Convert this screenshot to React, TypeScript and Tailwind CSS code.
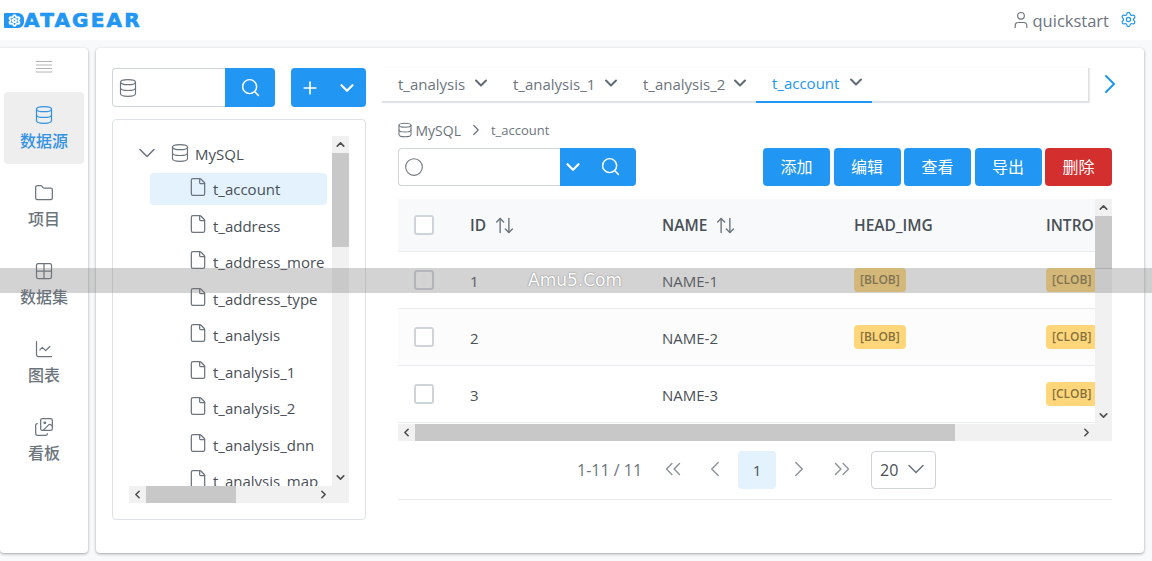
import React from 'react';
import {
  ArrowUpDown,
  ChartLine,
  ChevronDown,
  ChevronLeft,
  ChevronRight,
  ChevronUp,
  ChevronsLeft,
  ChevronsRight,
  Circle,
  Database,
  File,
  Folder,
  Grid2x2,
  Images,
  Plus,
  Search,
  Settings,
  User,
} from 'lucide-react';

const font = "font-['Open_Sans','Noto_Sans_CJK_SC',sans-serif]";

const navItems = [
  { label: '数据源', Icon: Database, active: true },
  { label: '项目', Icon: Folder, active: false },
  { label: '数据集', Icon: Grid2x2, active: false },
  { label: '图表', Icon: ChartLine, active: false },
  { label: '看板', Icon: Images, active: false },
];

const tables = [
  't_account',
  't_address',
  't_address_more',
  't_address_type',
  't_analysis',
  't_analysis_1',
  't_analysis_2',
  't_analysis_dnn',
  't_analysis_map',
];

const tabs = [
  { name: 't_analysis', width: 'w-[115px]' },
  { name: 't_analysis_1', width: 'w-[130px]' },
  { name: 't_analysis_2', width: 'w-[129px]' },
  { name: 't_account', width: 'w-[116px]', active: true },
];

const actions = [
  { label: '添加', color: 'bg-[#2196f3]' },
  { label: '编辑', color: 'bg-[#2196f3]' },
  { label: '查看', color: 'bg-[#2196f3]' },
  { label: '导出', color: 'bg-[#2196f3]' },
  { label: '删除', color: 'bg-[#d32f2f]' },
];

const rows = [
  { id: '1', name: 'NAME-1', blob: true, bg: 'bg-white' },
  { id: '2', name: 'NAME-2', blob: true, bg: 'bg-[#fcfcfc]' },
  { id: '3', name: 'NAME-3', blob: false, bg: 'bg-white' },
];

const Arrow = ({ Icon }: { Icon: typeof ChevronUp }) => (
  <div className="w-[17px] h-[17px] shrink-0 flex items-center justify-center">
    <Icon size={13} strokeWidth={3} className="text-[#505050]" />
  </div>
);

const Badge = ({ text }: { text: string }) => (
  <span className="shrink-0 h-6 px-[6px] flex items-center rounded-[4px] bg-[#ffd77a] text-[12px] font-semibold text-[#85703f]">
    {text}
  </span>
);

const Logo = () => (
  <div className="flex items-center pl-1 text-[#2196f3]">
    <div className="w-5 h-[15px] bg-[#2196f3] rounded-r-[6px] rounded-l-[1px] flex items-center justify-center">
      <Settings size={13} strokeWidth={3.5} className="text-white" />
    </div>
    <span className="font-['DejaVu_Sans',sans-serif] font-bold text-[20px] leading-none tracking-[2.2px] [-webkit-text-stroke:0.7px_#2196f3]">
      ATAGEAR
    </span>
  </div>
);

const MenuLines = () => (
  <svg width="16" height="12" viewBox="0 0 16 12" className="text-[#b4b4b4]">
    <path d="M0 .5h16M0 4h16M0 7.5h16M0 11h16" stroke="currentColor" strokeWidth="1" fill="none" />
  </svg>
);

const SideNav = () => (
  <aside className="w-[88px] h-[505px] shrink-0 bg-white rounded-r-[4px] rounded-b-[4px] shadow-[0_1px_3px_rgba(0,0,0,0.35)] flex flex-col items-center">
    <div className="h-11 flex justify-center shrink-0 pt-[13px]">
      <MenuLines />
    </div>
    <nav className="flex flex-col gap-[6px]">
      {navItems.map(({ label, Icon, active }) => (
        <div
          key={label}
          className={`w-20 h-[72px] rounded-[4px] pt-[1px] flex flex-col items-center justify-center gap-[5px] text-[16px] leading-[22px] font-medium ${
            active ? 'bg-[#eeeeee] text-[#3593e4]' : 'text-[#6c757d]'
          }`}
        >
          <Icon size={20} strokeWidth={1.5} />
          <span>{label}</span>
        </div>
      ))}
    </nav>
  </aside>
);

const TreeColumn = () => (
  <div className="w-[254px] shrink-0 flex flex-col gap-3">
    <div className="flex h-[39px] gap-4">
      <div className="flex w-[163px]">
        <div className="w-[113px] border border-r-0 border-[#ced4da] rounded-l-[4px] pl-[5px] flex items-center">
          <Database size={20} strokeWidth={1.4} className="text-[#6c757d]" />
        </div>
        <div className="w-[50px] bg-[#2196f3] rounded-r-[4px] flex items-center justify-center">
          <Search size={21} strokeWidth={1.7} className="text-white" />
        </div>
      </div>
      <div className="w-[75px] bg-[#2196f3] rounded-[4px] flex items-center text-white">
        <Plus size={20} strokeWidth={2} className="ml-[9px]" />
        <ChevronDown size={22} strokeWidth={2.4} className="ml-[16px]" />
      </div>
    </div>
    <div className="h-[401px] border border-[#dee2e6] rounded-[4px] p-4">
      <div className="h-[367px] w-[220px] flex flex-col">
        <div className="flex h-[350px]">
          <div className="w-[203px] overflow-hidden text-[#495057] text-[15px]">
            <div className="h-[35px] flex items-center pl-1">
              <ChevronDown size={28} strokeWidth={1.3} className="shrink-0 text-[#6c757d] -translate-y-[1px]" />
              <Database size={20} strokeWidth={1.4} className="shrink-0 ml-[9px] text-[#6c757d] -translate-y-[1px]" />
              <span className="ml-[5px] translate-y-[1px]">MySQL</span>
            </div>
            {tables.map((name, i) => (
              <div key={name} className="h-[36.5px] pl-[21px] flex items-center">
                <div
                  className={`w-[177px] h-8 rounded-[4px] pl-[38px] flex items-center whitespace-nowrap ${
                    i === 0 ? 'bg-[#e3f2fd]' : ''
                  }`}
                >
                  <File size={20} strokeWidth={1.5} className="shrink-0 -translate-y-[2px] text-[#6c757d]" />
                  <span className="ml-[5px]">{name}</span>
                </div>
              </div>
            ))}
          </div>
          <div className="w-[17px] bg-[#f1f1f1] flex flex-col">
            <Arrow Icon={ChevronUp} />
            <div className="h-[94px] bg-[#c8c8c8]" />
            <div className="grow" />
            <Arrow Icon={ChevronDown} />
          </div>
        </div>
        <div className="h-[17px] bg-[#f1f1f1] flex">
          <Arrow Icon={ChevronLeft} />
          <div className="w-[90px] bg-[#c8c8c8]" />
          <div className="grow" />
          <Arrow Icon={ChevronRight} />
          <div className="w-[17px]" />
        </div>
      </div>
    </div>
  </div>
);

const Tabs = () => (
  <div className="flex h-[35px]">
    <div className="w-[707px] flex border-b-2 border-r border-[#dee2e6] shadow-[1px_0_1px_rgba(0,0,0,0.08)]">
      {tabs.map((tab) => (
        <div
          key={tab.name}
          className={`${tab.width} h-[35px] pl-4 pr-[6px] flex items-center justify-between text-[15px] ${
            tab.active ? 'border-b-2 border-[#2196f3] text-[#2196f3]' : 'text-[#6c757d]'
          }`}
        >
          <span className="-translate-y-[1px]">{tab.name}</span>
          <ChevronDown size={20} strokeWidth={2.4} className="-translate-y-[3px] text-[#5f6b76]" />
        </div>
      ))}
    </div>
    <div className="grow flex items-center pl-[5px]">
      <ChevronRight size={32} strokeWidth={1.5} className="text-[#2196f3] -translate-y-[2px]" />
    </div>
  </div>
);

const Toolbar = () => (
  <div className="flex justify-between h-[38px]">
    <div className="flex w-[238px]">
      <div className="w-[162px] border border-r-0 border-[#ced4da] rounded-l-[4px] pl-[5px] flex items-center">
        <Circle size={20} strokeWidth={1.3} className="text-[#6c757d]" />
      </div>
      <div className="w-[76px] bg-[#2196f3] rounded-r-[4px] flex items-center text-white">
        <ChevronDown size={22} strokeWidth={2.4} className="ml-[2px]" />
        <Search size={21} strokeWidth={1.7} className="ml-4 -translate-y-[1px]" />
      </div>
    </div>
    <div className="flex gap-[3.5px]">
      {actions.map((a) => (
        <div
          key={a.label}
          className={`w-[67px] ${a.color} rounded-[4px] text-white text-[16px] flex items-center justify-center`}
        >
          {a.label}
        </div>
      ))}
    </div>
  </div>
);

const HeaderCell = ({ label, sort }: { label: string; sort?: boolean }) => (
  <div className="w-[192px] shrink-0 flex items-center gap-[8px] whitespace-nowrap translate-y-[1px]">
    <span>{label}</span>
    {sort && <ArrowUpDown size={21} strokeWidth={1.6} className="text-[#6c757d] -translate-y-[1px]" />}
  </div>
);

const DataTable = () => (
  <div className="w-[714px] h-[242px] flex flex-col">
    <div className="flex h-[225px]">
      <div className="w-[697px] overflow-hidden text-[15px] text-[#495057]">
        <div className="w-[900px] h-[53px] bg-[#f8f9fa] border-b border-[#e9ecef] flex items-center font-semibold text-[15.5px]">
          <div className="w-[72px] pl-4 shrink-0">
            <div className="w-5 h-5 bg-white border-2 border-[#ced4da] rounded-[3px]" />
          </div>
          <HeaderCell label="ID" sort />
          <HeaderCell label="NAME" sort />
          <HeaderCell label="HEAD_IMG" />
          <HeaderCell label="INTRO" />
        </div>
        {rows.map((row) => (
          <div key={row.id} className={`w-[900px] h-[57px] ${row.bg} border-b border-[#e9ecef] flex items-center`}>
            <div className="w-[72px] pl-4 shrink-0">
              <div className="w-5 h-5 bg-white border-2 border-[#ced4da] rounded-[3px]" />
            </div>
            <div className="w-[192px] shrink-0 translate-y-[1px]">{row.id}</div>
            <div className="w-[192px] shrink-0 translate-y-[1px]">{row.name}</div>
            <div className="w-[192px] shrink-0 flex">{row.blob && <Badge text="[BLOB]" />}</div>
            <div className="w-[192px] shrink-0 flex">
              <Badge text="[CLOB]" />
            </div>
          </div>
        ))}
      </div>
      <div className="w-[17px] bg-[#f1f1f1] flex flex-col">
        <Arrow Icon={ChevronUp} />
        <div className="h-[53px] bg-[#c8c8c8]" />
        <div className="grow" />
        <Arrow Icon={ChevronDown} />
      </div>
    </div>
    <div className="h-[17px] bg-[#f1f1f1] flex">
      <Arrow Icon={ChevronLeft} />
      <div className="w-[540px] bg-[#c8c8c8]" />
      <div className="grow" />
      <Arrow Icon={ChevronRight} />
      <div className="w-[17px]" />
    </div>
  </div>
);

const Pager = () => (
  <div className="h-[59px] pt-[10px] border-b border-[#e9ecef] flex text-[#6c757d] text-[16px]">
    <div className="h-[38px] flex items-center pl-[179px]">
      <span className="w-[64px] whitespace-nowrap">1-11 / 11</span>
      <ChevronsLeft size={26} strokeWidth={1.3} className="ml-[18.5px] text-[#8a9299] -translate-y-[1px]" />
      <ChevronLeft size={26} strokeWidth={1.3} className="ml-[16.5px] text-[#8a9299] -translate-y-[1px]" />
      <div className="ml-[10px] w-[38px] h-[38px] rounded-[4px] bg-[#e3f2fd] text-[#495057] text-[15px] flex items-center justify-center">1</div>
      <ChevronRight size={26} strokeWidth={1.3} className="ml-[10px] text-[#8a9299] -translate-y-[1px]" />
      <ChevronsRight size={26} strokeWidth={1.3} className="ml-[16.5px] text-[#8a9299] -translate-y-[1px]" />
      <div className="ml-[16.5px] w-[65px] h-[38px] border border-[#ced4da] rounded-[4px] flex items-center pl-2 text-[#495057]">
        <span>20</span>
        <ChevronDown size={28} strokeWidth={1.3} className="ml-1 -translate-y-[1px] text-[#6c757d]" />
      </div>
    </div>
  </div>
);

export default function App() {
  return (
    <div className={`relative w-[1152px] h-[561px] overflow-hidden bg-[#f8f9fa] ${font}`}>
      <header className="h-10 bg-white flex items-center justify-between pr-[15px]">
        <Logo />
        <div className="flex items-center">
          <User size={20} strokeWidth={1.4} className="text-[#6c757d]" />
          <span className="ml-[2px] text-[16.5px] text-[#6c757d] translate-y-[1px]">quickstart</span>
          <Settings size={17} strokeWidth={1.7} className="ml-[11px] -translate-y-[1px] text-[#2196f3]" />
        </div>
      </header>
      <div className="flex gap-2 pt-2 pr-2">
        <SideNav />
        <main className="grow h-[505px] bg-white rounded-[4px] shadow-[0_1px_3px_rgba(0,0,0,0.35)] pl-4 pt-5 flex gap-4">
          <TreeColumn />
          <section className="w-[762px]">
            <Tabs />
            <div className="pl-4 w-[730px]">
              <div className="h-[45px] flex items-center text-[#6c757d] pt-[10px]">
                <Database size={16} strokeWidth={1.6} className="-ml-[1.5px] -translate-y-[1px]" />
                <span className="ml-[3px] text-[14px]">MySQL</span>
                <ChevronRight size={18} strokeWidth={1.6} className="ml-[6px] -translate-y-[1px]" />
                <span className="ml-[6px] text-[13px]">t_account</span>
              </div>
              <Toolbar />
              <div className="h-[13px]" />
              <DataTable />
              <Pager />
            </div>
          </section>
        </main>
      </div>
      <div className="absolute inset-x-0 top-[268px] h-[25px] bg-[rgba(120,120,120,0.33)] pl-[528px] flex items-center font-['DejaVu_Sans',sans-serif] text-[17px] text-white [text-shadow:0_0_1.5px_#666]">
        Amu5.Com
      </div>
    </div>
  );
}
